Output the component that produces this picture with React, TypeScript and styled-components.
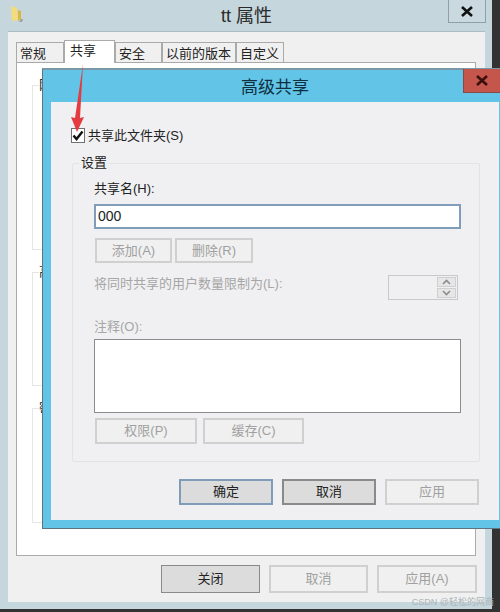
import React from "react";
import styled, { createGlobalStyle } from "styled-components";

const GlobalStyle = createGlobalStyle`
  html, body {
    margin: 0;
    padding: 0;
    background: #333333;
  }
  * {
    box-sizing: border-box;
  }
`;

const fontStack = `"Liberation Sans", "Noto Sans CJK SC", sans-serif`;

const Desktop = styled.div`
  position: relative;
  width: 500px;
  height: 612px;
  overflow: hidden;
  background: #333333;
  padding: 0 8px 3px 0;
  font-family: ${fontStack};
  font-size: 13px;
  color: #222;
`;

const Window = styled.div`
  height: 100%;
  display: flex;
  flex-direction: column;
  background: #c5d6dc;
  padding: 0 7px 7px 8px;
`;

const TitleBar = styled.div`
  position: relative;
  height: 31px;
  flex: none;
  display: flex;
  align-items: center;
  justify-content: center;
  font-size: 18px;
  color: #2a2a2a;
  padding-bottom: 4px;
`;

const FolderIcon = styled.svg`
  position: absolute;
  left: 1px;
  top: 5px;
`;

const CloseButton = styled.div`
  position: absolute;
  right: -1px;
  top: -1px;
  width: 38px;
  height: 24px;
  display: flex;
  align-items: center;
  justify-content: center;
  border: 1px solid #8da0a8;
  background: #c9d9df;
`;

const Client = styled.div`
  flex: 1;
  display: flex;
  flex-direction: column;
  background: #f0f0f0;
  border-top: 1px solid #a9bdc6;
  padding: 8px 9px 9px 8px;
`;

const TabRow = styled.div`
  display: flex;
  height: 23px;
  align-items: flex-end;
  position: relative;
  z-index: 1;
`;

const Tab = styled.div<{ $active?: boolean; $w: number }>`
  width: ${(p) => p.$w}px;
  height: ${(p) => (p.$active ? 23 : 21)}px;
  background: ${(p) => (p.$active ? "#ffffff" : "#f0f0f0")};
  border: 1px solid #aaaaaa;
  border-bottom: ${(p) => (p.$active ? "none" : "1px solid #aaaaaa")};
  display: flex;
  align-items: center;
  font-size: 13px;
  white-space: nowrap;
  padding-left: ${(p) => (p.$active ? 5 : 3)}px;
  padding-bottom: ${(p) => (p.$active ? 5 : 1)}px;
`;

const TabPage = styled.div`
  height: 494px;
  flex: none;
  margin-top: -1px;
  background: #ffffff;
  border: 1px solid #aaaaaa;
  padding: 22px 0 0 15px;
  display: flex;
  flex-direction: column;
  gap: 22px;
`;

const PageGroup = styled.div<{ $h: number }>`
  position: relative;
  width: 60px;
  height: ${(p) => p.$h}px;
  border: 1px solid #e6e6e6;
  border-right: none;
`;

const PageGroupLabel = styled.span`
  position: absolute;
  left: 6px;
  top: -9px;
  font-size: 13px;
  line-height: 16px;
  background: #fff;
`;

const WindowFooter = styled.div`
  display: flex;
  justify-content: flex-end;
  gap: 9px;
  margin-top: 9px;
  margin-right: -1px;
`;

const Button = styled.div<{ $w: number; $h?: number; $kind?: "pressed" | "default" | "off" }>`
  width: ${(p) => p.$w}px;
  height: ${(p) => p.$h ?? 26}px;
  flex: none;
  display: flex;
  align-items: center;
  justify-content: center;
  font-size: 13px;
  padding-bottom: 3px;
  background: ${(p) => (p.$kind === "off" || !p.$kind ? "#f0f0f0" : "#dcdcdc")};
  color: ${(p) => (p.$kind === "off" || !p.$kind ? "#a0a0a0" : "#222222")};
  border: ${(p) =>
    p.$kind === "default"
      ? "2px solid #7f9db9"
      : p.$kind === "pressed"
      ? "2px solid #8a8a8a"
      : "2px solid #d0d0d0"};
`;

const CloseFooterButton = styled(Button)`
  border-width: 1px;
  border-color: #8a8a8a;
`;

const Dialog = styled.div`
  position: absolute;
  left: 42px;
  top: 68px;
  width: 458px;
  height: 461px;
  display: flex;
  flex-direction: column;
  background: #62c5e8;
  border: 1px solid #5f7480;
  border-right: none;
  border-top: 2px solid #7a98a6;
  padding: 0 1px 8px 8px;
`;

const DialogTitleBar = styled.div`
  position: relative;
  height: 32px;
  flex: none;
  display: flex;
  align-items: center;
  justify-content: center;
  font-size: 17px;
  color: #10303f;
  padding-bottom: 2px;
`;

const DialogClose = styled.div`
  position: absolute;
  right: -1px;
  top: -1px;
  width: 37px;
  height: 24px;
  display: flex;
  align-items: center;
  justify-content: center;
  background: #c4564c;
  border-left: 1px solid #8a4a44;
  border-bottom: 1px solid #8a4a44;
`;

const DialogBody = styled.div`
  flex: 1;
  display: flex;
  flex-direction: column;
  background: #f0f0f2;
  padding: 24px 19px 15px 21px;
`;

const CheckRow = styled.div`
  display: flex;
  align-items: center;
  gap: 3px;
  height: 16px;
  margin-left: -1px;
`;

const CheckBox = styled.div`
  width: 14px;
  height: 15px;
  margin-top: 2px;
  border: 1px solid #707070;
  background: #fff;
  display: flex;
  align-items: center;
  justify-content: center;
`;

const Settings = styled.div`
  position: relative;
  margin-top: 21px;
  height: 299px;
  border: 1px solid #e3e3e3;
  border-radius: 2px;
  padding: 17px 18px 0 21px;
  display: flex;
  flex-direction: column;
`;

const SettingsLabel = styled.span`
  position: absolute;
  left: 6px;
  top: -9px;
  padding: 0 2px;
  line-height: 16px;
  background: #f0f0f2;
`;

const FieldLabel = styled.div<{ $off?: boolean }>`
  line-height: 16px;
  color: ${(p) => (p.$off ? "#a6a6a6" : "#222222")};
`;

const NameInput = styled.div`
  margin-top: 7px;
  height: 25px;
  background: #fff;
  border: 2px solid #7f9db9;
  padding-left: 2px;
  font-size: 14px;
  line-height: 21px;
  color: #222;
`;

const ButtonRow = styled.div<{ $gap: number; $top: number }>`
  display: flex;
  gap: ${(p) => p.$gap}px;
  margin-top: ${(p) => p.$top}px;
  margin-left: 1px;
`;

const LimitRow = styled.div`
  display: flex;
  align-items: flex-start;
  justify-content: space-between;
  margin-top: 12px;
  height: 25px;
  padding: 1px 3px 0 0;
`;

const Spinner = styled.div`
  width: 70px;
  height: 25px;
  margin-top: -1px;
  border: 1px solid #c8c8c8;
  display: flex;
  justify-content: flex-end;
  padding: 1px;
`;

const SpinnerButtons = styled.div`
  width: 19px;
  display: flex;
  flex-direction: column;
  gap: 1px;
`;

const SpinnerButton = styled.div`
  flex: 1;
  background: #e6e6e6;
  border: 1px solid #cfcfcf;
  display: flex;
  align-items: center;
  justify-content: center;
`;

const CommentLabel = styled(FieldLabel)`
  margin-top: 19px;
`;

const CommentBox = styled.div`
  margin-top: 4px;
  height: 74px;
  background: #fff;
  border: 1px solid #8c8c8c;
`;

const DialogFooter = styled.div`
  display: flex;
  gap: 9px;
  margin-top: 17px;
  margin-left: 107px;
`;

const Arrow = styled.svg`
  position: absolute;
  left: 66px;
  top: 62px;
`;

const Watermark = styled.span`
  position: absolute;
  right: 6px;
  bottom: 4px;
  font-size: 9px;
  line-height: 12px;
  color: #aab4b8;
`;

const CloseX = ({ color }: { color: string }) => (
  <svg width="12" height="11" viewBox="0 0 12 11">
    <path d="M1 1 L11 10 M11 1 L1 10" stroke={color} strokeWidth="2.6" fill="none" />
  </svg>
);

const Chevron = ({ up }: { up?: boolean }) => (
  <svg width="9" height="6" viewBox="0 0 9 6">
    <path
      d={up ? "M1 5 L4.5 1.5 L8 5" : "M1 1 L4.5 4.5 L8 1"}
      stroke="#8c8c8c"
      strokeWidth="1.6"
      fill="none"
    />
  </svg>
);

export default function App() {
  return (
    <>
      <GlobalStyle />
      <Desktop>
        <Window>
          <TitleBar>
            <FolderIcon width="16" height="18" viewBox="0 0 16 18">
              <path d="M2 1 L8 3 L9 15 L3 16 Z" fill="#f2dc7c" />
              <path d="M9 5 L12 6 L12 14 L9 16 Z" fill="#d9b648" />
              <path d="M12 14 L14 14 L13 17 L10 17 Z" fill="#9aa0a0" />
            </FolderIcon>
            tt 属性
            <CloseButton>
              <CloseX color="#111" />
            </CloseButton>
          </TitleBar>
          <Client>
            <TabRow>
              <Tab $w={48}>常规</Tab>
              <Tab $w={51} $active>
                共享
              </Tab>
              <Tab $w={47}>安全</Tab>
              <Tab $w={74}>以前的版本</Tab>
              <Tab $w={48}>自定义</Tab>
            </TabRow>
            <TabPage>
              <PageGroup $h={165}>
                <PageGroupLabel>网络文件</PageGroupLabel>
              </PageGroup>
              <PageGroup $h={114}>
                <PageGroupLabel>高级共享</PageGroupLabel>
              </PageGroup>
              <PageGroup $h={115}>
                <PageGroupLabel>密码保护</PageGroupLabel>
              </PageGroup>
            </TabPage>
            <WindowFooter>
              <CloseFooterButton $w={99} $h={28} $kind="pressed">
                关闭
              </CloseFooterButton>
              <Button $w={99} $h={28}>
                取消
              </Button>
              <Button $w={100} $h={28}>
                应用(A)
              </Button>
            </WindowFooter>
          </Client>
        </Window>

        <Dialog>
          <DialogTitleBar>
            高级共享
            <DialogClose>
              <CloseX color="#3a0f0c" />
            </DialogClose>
          </DialogTitleBar>
          <DialogBody>
            <CheckRow>
              <CheckBox>
                <svg width="12" height="11" viewBox="0 0 12 11">
                  <path d="M1.5 5.5 L4.5 9 L10.5 1.5" stroke="#111" strokeWidth="2.4" fill="none" />
                </svg>
              </CheckBox>
              共享此文件夹(S)
            </CheckRow>
            <Settings>
              <SettingsLabel>设置</SettingsLabel>
              <FieldLabel>共享名(H):</FieldLabel>
              <NameInput>000</NameInput>
              <ButtonRow $gap={3} $top={9}>
                <Button $w={77} $h={25}>
                  添加(A)
                </Button>
                <Button $w={78} $h={25}>
                  删除(R)
                </Button>
              </ButtonRow>
              <LimitRow>
                <FieldLabel $off>将同时共享的用户数量限制为(L):</FieldLabel>
                <Spinner>
                  <SpinnerButtons>
                    <SpinnerButton>
                      <Chevron up />
                    </SpinnerButton>
                    <SpinnerButton>
                      <Chevron />
                    </SpinnerButton>
                  </SpinnerButtons>
                </Spinner>
              </LimitRow>
              <CommentLabel $off>注释(O):</CommentLabel>
              <CommentBox />
              <ButtonRow $gap={6} $top={5}>
                <Button $w={102}>权限(P)</Button>
                <Button $w={101}>缓存(C)</Button>
              </ButtonRow>
            </Settings>
            <DialogFooter>
              <Button $w={94} $kind="default">
                确定
              </Button>
              <Button $w={94} $kind="pressed">
                取消
              </Button>
              <Button $w={94}>应用</Button>
            </DialogFooter>
          </DialogBody>
        </Dialog>

        <Arrow width="24" height="72" viewBox="0 0 24 72">
          <path d="M17 2 L14 56 L18 55 L11 70 L5 55 L9 56 Z" fill="#e33b3f" />
        </Arrow>
        <Watermark>CSDN @轻松的网商</Watermark>
      </Desktop>
    </>
  );
}
